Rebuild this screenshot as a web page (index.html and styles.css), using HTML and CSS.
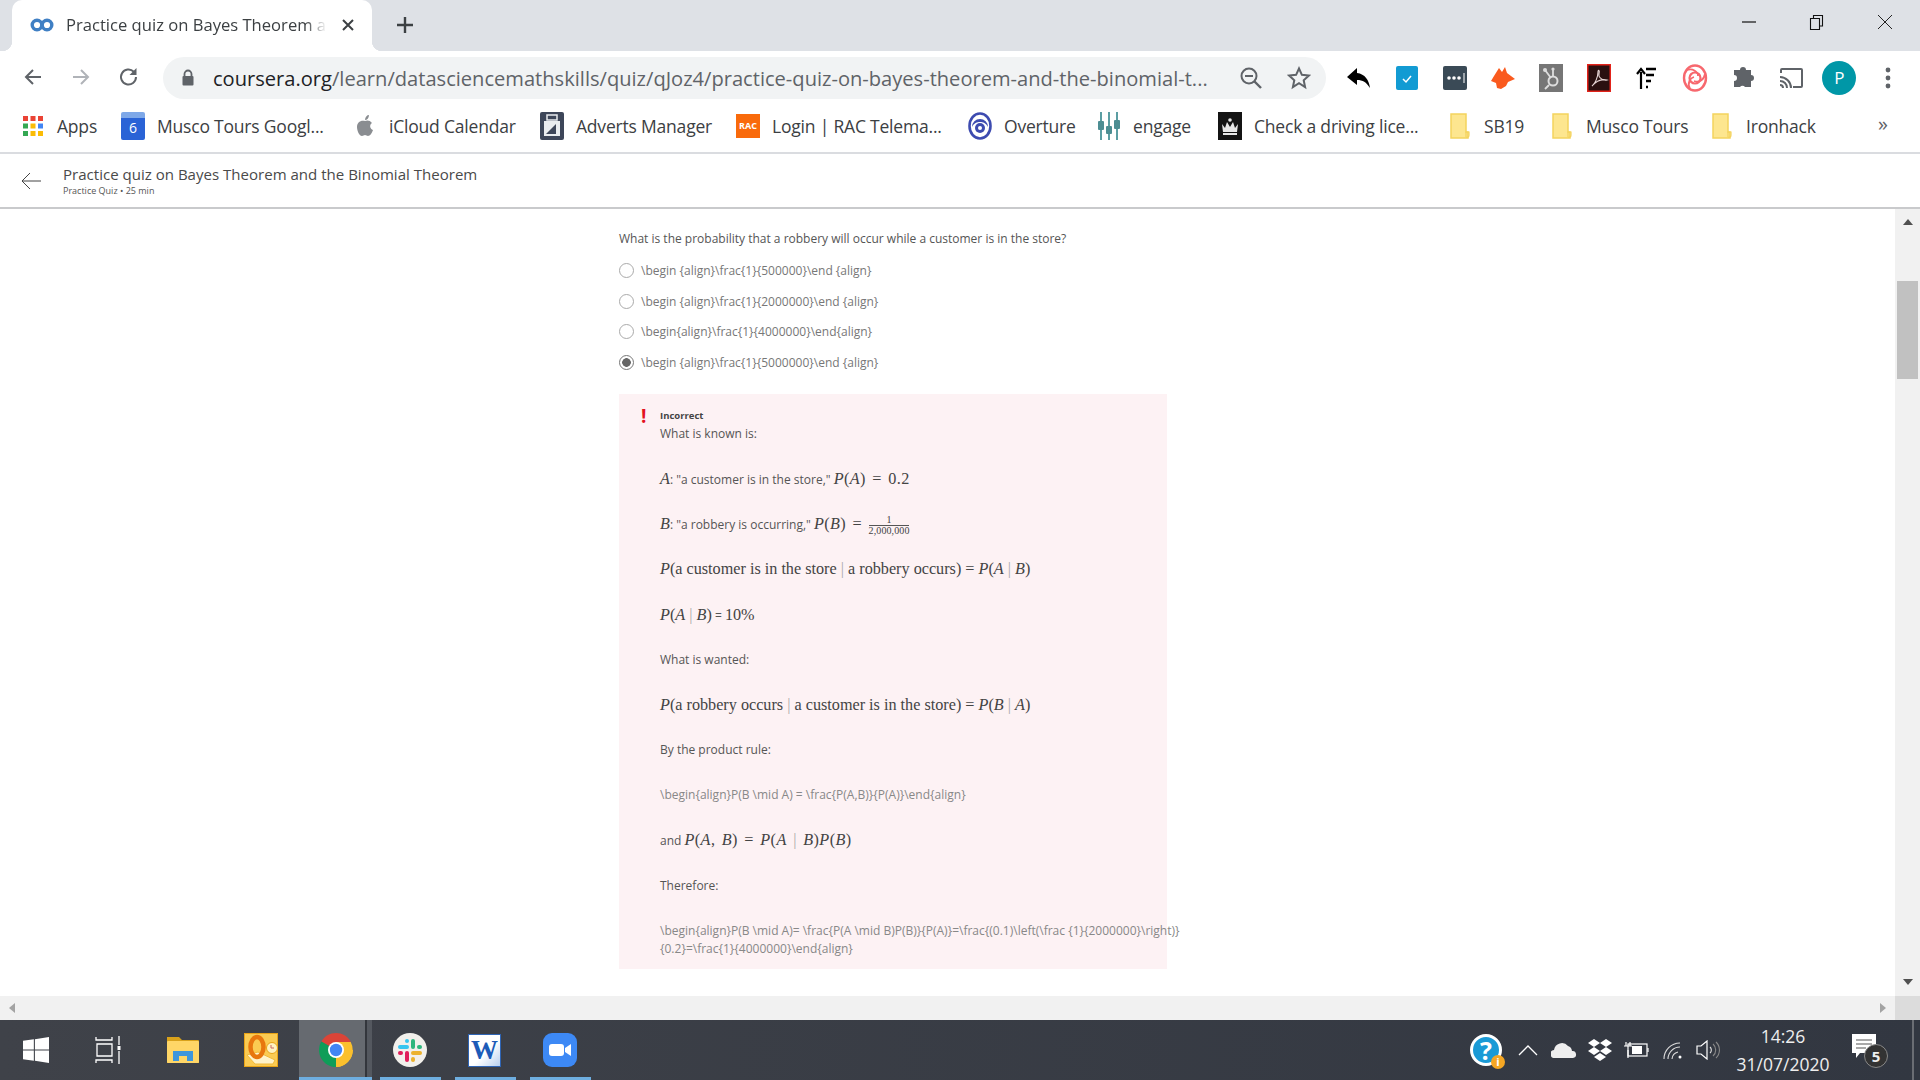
FILE: index.html
```html
<!DOCTYPE html>
<html lang="en">
<head>
<meta charset="utf-8">
<title>Practice quiz on Bayes Theorem</title>
<link rel="stylesheet" href="styles.css">
</head>
<body>
<div class="screen">
  <header class="tabstrip">
    <div class="tab">
      <svg class="fav" viewBox="0 0 24 14" width="24" height="14"><circle cx="7" cy="7" r="4.8" fill="none" stroke="#3f7fc4" stroke-width="3.4"/><circle cx="17" cy="7" r="4.8" fill="none" stroke="#3f7fc4" stroke-width="3.4"/></svg>
      <span class="tab-title">Practice quiz on Bayes Theorem a</span>
      <svg class="tab-x" viewBox="0 0 12 12" width="12" height="12"><path d="M1 1l10 10M11 1L1 11" stroke="#3c4043" stroke-width="2"/></svg>
    </div>
    <svg class="newtab" viewBox="0 0 18 18" width="18" height="18"><path d="M9 1v16M1 9h16" stroke="#3c4043" stroke-width="2.4"/></svg>
    <div class="winctl">
      <svg viewBox="0 0 14 14" width="14" height="14"><path d="M0 7h14" stroke="#111" stroke-width="1.2"/></svg>
      <svg viewBox="0 0 16 16" width="16" height="16"><path d="M1.5 4.500h9v11h-9zM4.500 4.500v-3h9v10.500h-3" fill="none" stroke="#111" stroke-width="1.1"/></svg>
      <svg viewBox="0 0 16 16" width="16" height="16"><path d="M1 1l14 14M15 1L1 15" stroke="#222" stroke-width="1"/></svg>
    </div>
  </header>

  <nav class="toolbar">
    <div class="navbtns">
      <svg viewBox="0 0 20 20" width="20" height="20"><path d="M18 10H3M10 3l-7 7 7 7" fill="none" stroke="#5f6368" stroke-width="2"/></svg>
      <svg viewBox="0 0 20 20" width="20" height="20"><path d="M2 10h15M10 3l7 7-7 7" fill="none" stroke="#b0b3b8" stroke-width="2"/></svg>
      <svg viewBox="0 0 22 22" width="22" height="22"><path d="M18 11a7.500 7.500 0 1 1-2.200-5.300" fill="none" stroke="#5f6368" stroke-width="2"/><path d="M18.500 2v7h-7z" fill="#5f6368"/></svg>
    </div>
    <div class="omnibox">
      <svg class="lock" viewBox="0 0 14 18" width="14" height="18"><path d="M3.500 7V5a3.500 3.500 0 0 1 7 0v2" fill="none" stroke="#5f6368" stroke-width="1.800"/><rect x="1.500" y="7" width="11" height="9.500" rx="1" fill="#5f6368"/></svg>
      <span class="url"><span class="host">coursera.org</span>/learn/datasciencemathskills/quiz/qJoz4/practice-quiz-on-bayes-theorem-and-the-binomial-t...</span>
      <svg class="omni-ic zoomic" viewBox="0 0 24 24" width="24" height="24"><circle cx="10" cy="10" r="7.500" fill="none" stroke="#5f6368" stroke-width="2"/><path d="M15.500 15.500L22 22" stroke="#5f6368" stroke-width="2.400"/><path d="M6 10h8" stroke="#5f6368" stroke-width="2"/></svg>
      <svg class="omni-ic star" viewBox="0 0 24 24" width="24" height="24"><path d="M12 2.500l2.900 6.300 6.900.8-5.100 4.700 1.400 6.800L12 17.200l-6.100 3.900 1.400-6.800-5.100-4.700 6.900-.8z" fill="none" stroke="#5f6368" stroke-width="2"/></svg>
    </div>
    <div class="exts">
      <svg viewBox="0 0 26 24" width="26" height="24"><path d="M11 2L1 11l10 8v-5c6 0 9 2 13 8-1-8-5-14-13-15z" fill="#000"/></svg>
      <svg viewBox="0 0 22 24" width="22" height="24"><rect width="22" height="24" rx="2" fill="#129bd3"/><path d="M7 13l3 3 5-6" fill="none" stroke="#fff" stroke-width="1.500"/></svg>
      <svg viewBox="0 0 24 24" width="24" height="24"><rect width="24" height="24" rx="2" fill="#3a4a56"/><circle cx="6" cy="12" r="1.800" fill="#fff"/><circle cx="11" cy="12" r="1.800" fill="#fff"/><circle cx="16" cy="12" r="1.800" fill="#fff"/><path d="M21 7v10" stroke="#fff" stroke-width="1"/></svg>
      <svg viewBox="0 0 24 24" width="24" height="24"><path d="M3 10L8 2l3 4 3-5 2 6 8 6-7 3-2 4-5 3-4-1-1-5-5-2z" fill="#fa5a1e"/></svg>
      <svg viewBox="0 0 24 28" width="24" height="28"><rect width="24" height="28" fill="#767676"/><circle cx="14" cy="17" r="4.500" fill="none" stroke="#ddd" stroke-width="2"/><path d="M6 6l6 8M14 5v8M10 21l-4 4" stroke="#ddd" stroke-width="1.800"/><circle cx="6" cy="6" r="2" fill="#ddd"/><circle cx="14" cy="5" r="1.600" fill="#ddd"/></svg>
      <svg viewBox="0 0 24 28" width="24" height="28"><rect x=".75" y=".75" width="22.500" height="26.500" fill="#2a1010" stroke="#e2231a" stroke-width="1.500"/><path d="M5 22c3-2 6-9 6-14 0-3 2-2 1 2-1 4 5 7 8 6-4-1-10 0-15 6z" fill="none" stroke="#e9d7d7" stroke-width="1.100"/></svg>
      <svg viewBox="0 0 24 24" width="24" height="24"><path d="M6 23V6M2 8l4-5 4 5" fill="none" stroke="#000" stroke-width="2.200"/><path d="M11 3h10M11 9h8M11 15h5M11 21h2" stroke="#000" stroke-width="2.400"/></svg>
      <svg viewBox="0 0 26 28" width="26" height="28"><ellipse cx="13" cy="14" rx="11" ry="12.500" fill="none" stroke="#f7686e" stroke-width="2.400"/><circle cx="13" cy="14" r="5.500" fill="none" stroke="#f7686e" stroke-width="2.200"/><path d="M5 6c6-2 11 2 11 6M23 10c-1 6-6 9-11 7M8 25c-3-6 0-11 4-12" fill="none" stroke="#f7686e" stroke-width="1.800"/></svg>
      <svg viewBox="0 0 24 24" width="24" height="24"><path d="M9 4a3 3 0 0 1 6 0h5v5a3 3 0 0 1 0 6v6h-6a3 3 0 0 0-5 0H3v-6a3 3 0 0 0 0-6V4z" fill="#5f6368"/></svg>
      <svg viewBox="0 0 24 22" width="24" height="22"><path d="M2 6V3a1 1 0 0 1 1-1h19a1 1 0 0 1 1 1v16a1 1 0 0 1-1 1h-8" fill="none" stroke="#5f6368" stroke-width="2"/><path d="M1 10c6 0 11 5 11 11M1 14c4 0 7 3 7 7M1 18c2 0 3 1 3 3" fill="none" stroke="#5f6368" stroke-width="2"/></svg>
      <span class="avatar">P</span>
      <svg viewBox="0 0 6 22" width="6" height="22"><circle cx="3" cy="3" r="2.400" fill="#5f6368"/><circle cx="3" cy="11" r="2.400" fill="#5f6368"/><circle cx="3" cy="19" r="2.400" fill="#5f6368"/></svg>
    </div>
  </nav>

  <nav class="bookmarks">
    <a class="bm"><svg viewBox="0 0 24 24" width="24" height="24"><g><rect x="2" y="2" width="5" height="5" fill="#ea4335"/><rect x="9.500" y="2" width="5" height="5" fill="#ea4335"/><rect x="17" y="2" width="5" height="5" fill="#ea4335"/><rect x="2" y="9.500" width="5" height="5" fill="#34a853"/><rect x="9.500" y="9.500" width="5" height="5" fill="#fbbc05"/><rect x="17" y="9.500" width="5" height="5" fill="#4285f4"/><rect x="2" y="17" width="5" height="5" fill="#34a853"/><rect x="9.500" y="17" width="5" height="5" fill="#fbbc05"/><rect x="17" y="17" width="5" height="5" fill="#fbbc05"/></g></svg><span>Apps</span></a>
    <a class="bm"><span class="ic-cal">6</span><span>Musco Tours Googl...</span></a>
    <a class="bm"><svg viewBox="0 0 18 24" width="18" height="24"><path d="M9 7c2-1 5-1 7 2-3 2-2 6 1 7-1 3-3 6-5 6-1 0-2-1-3-1s-2 1-3 1c-3 0-5-6-5-9 0-4 3-7 8-6zM9 6c0-3 2-5 4-5 0 3-2 5-4 5z" fill="#8a8d91"/></svg><span>iCloud Calendar</span></a>
    <a class="bm"><svg viewBox="0 0 24 28" width="24" height="28"><rect width="24" height="28" rx="2" fill="#3d4659"/><rect x="4" y="9" width="16" height="15" fill="#e9ecef"/><path d="M6 22l10-10v10z" fill="#3d4659"/><rect x="7" y="3" width="10" height="5" fill="none" stroke="#e9ecef" stroke-width="1.500"/></svg><span>Adverts Manager</span></a>
    <a class="bm"><span class="ic-rac">RAC</span><span>Login | RAC Telema...</span></a>
    <a class="bm"><svg viewBox="0 0 24 28" width="24" height="28"><ellipse cx="12" cy="14" rx="10.500" ry="12.500" fill="none" stroke="#3d4bb0" stroke-width="2.600"/><path d="M4 15a8 8 0 0 1 16 0c-2-4-5-5-8-5s-6 1-8 5z" fill="#3d4bb0"/><circle cx="12" cy="16" r="5" fill="#3d4bb0"/><circle cx="12" cy="16" r="2" fill="#fff"/></svg><span>Overture</span></a>
    <a class="bm"><svg viewBox="0 0 24 28" width="24" height="28"><path d="M4 0v28M12 0v28M20 0v28" stroke="#5b9ea3" stroke-width="2"/><rect x="1" y="9" width="6" height="9" rx="1" fill="#4d8e93"/><rect x="9" y="14" width="6" height="8" rx="1" fill="#4d8e93"/><rect x="17" y="8" width="6" height="9" rx="1" fill="#4d8e93"/></svg><span>engage</span></a>
    <a class="bm"><svg viewBox="0 0 24 28" width="24" height="28"><rect width="24" height="28" fill="#141414"/><path d="M4 12l3 4 2-6 3 5 3-5 2 6 3-4-1 8H5zM5 21h14v2H5z" fill="#e8e8e8"/><circle cx="12" cy="8" r="1.800" fill="#e8e8e8"/></svg><span>Check a driving lice...</span></a>
    <a class="bm"><svg viewBox="0 0 20 26" width="20" height="26"><path d="M1 1h15v18h2v6H1z" fill="#fde68f" stroke="#f4d35e" stroke-width="1.500"/><path d="M16 24v-5h3v3a2 2 0 0 1-3 2" fill="none" stroke="#f4d35e" stroke-width="1.200"/></svg><span>SB19</span></a>
    <a class="bm"><svg viewBox="0 0 20 26" width="20" height="26"><path d="M1 1h15v18h2v6H1z" fill="#fde68f" stroke="#f4d35e" stroke-width="1.500"/><path d="M16 24v-5h3v3a2 2 0 0 1-3 2" fill="none" stroke="#f4d35e" stroke-width="1.200"/></svg><span>Musco Tours</span></a>
    <a class="bm"><svg viewBox="0 0 20 26" width="20" height="26"><path d="M1 1h15v18h2v6H1z" fill="#fde68f" stroke="#f4d35e" stroke-width="1.500"/><path d="M16 24v-5h3v3a2 2 0 0 1-3 2" fill="none" stroke="#f4d35e" stroke-width="1.200"/></svg><span>Ironhack</span></a>
    <span class="more">»</span>
  </nav>

  <section class="coursebar">
    <svg viewBox="0 0 20 18" width="20" height="18"><path d="M20 9H2M9 1L1 9l8 8" fill="none" stroke="#444" stroke-width="1"/></svg>
    <div class="coursetext">
      <div class="coursetitle">Practice quiz on Bayes Theorem and the Binomial Theorem</div>
      <div class="coursesub">Practice Quiz • 25 min</div>
    </div>
  </section>

  <main class="viewport">
    <div class="content">
      <p class="question">What is the probability that a robbery will occur while a customer is in the store?</p>
      <ul class="options">
        <li class="opt"><span class="radio"></span>\begin {align}\frac{1}{500000}\end {align}</li>
        <li class="opt"><span class="radio"></span>\begin {align}\frac{1}{2000000}\end {align}</li>
        <li class="opt"><span class="radio"></span>\begin{align}\frac{1}{4000000}\end{align}</li>
        <li class="opt"><span class="radio on"></span>\begin {align}\frac{1}{5000000}\end {align}</li>
      </ul>
      <article class="feedback">
        <span class="bang">!</span>
        <div class="incorrect">Incorrect</div>
        <div class="line first">What is known is:</div>
        <div class="line"><span class="m"><i>A</i></span>: "a customer is in the store," <span class="m wide"><i>P</i>(<i>A</i>) = 0.2</span></div>
        <div class="line"><span class="m"><i>B</i></span>: "a robbery is occurring," <span class="m wide"><i>P</i>(<i>B</i>) = <span class="frac"><span>1</span><span class="den">2,000,000</span></span></span></div>
        <div class="line"><span class="m"><i>P</i>(a customer is in the store <span class="bar">|</span> a robbery occurs) = <i>P</i>(<i>A</i> <span class="bar">|</span> <i>B</i>)</span></div>
        <div class="line"><span class="m"><i>P</i>(<i>A</i> <span class="bar">|</span> <i>B</i>)</span> = <span class="m">10%</span></div>
        <div class="line">What is wanted:</div>
        <div class="line"><span class="m"><i>P</i>(a robbery occurs <span class="bar">|</span> a customer is in the store) = <i>P</i>(<i>B</i> <span class="bar">|</span> <i>A</i>)</span></div>
        <div class="line">By the product rule:</div>
        <div class="line raw">\begin{align}P(B \mid A) = \frac{P(A,B)}{P(A)}\end{align}</div>
        <div class="line">and <span class="m wide"><i>P</i>(<i>A</i>, <i>B</i>) = <i>P</i>(<i>A</i> <span class="bar">|</span> <i>B</i>)<i>P</i>(<i>B</i>)</span></div>
        <div class="line">Therefore:</div>
        <div class="line raw">\begin{align}P(B \mid A)= \frac{P(A \mid B)P(B)}{P(A)}=\frac{(0.1)\left(\frac {1}{2000000}\right)}</div>
        <div class="raw cont">{0.2}=\frac{1}{4000000}\end{align}</div>
      </article>
    </div>
    <div class="vscroll">
      <span class="arr up"></span>
      <div class="track"><div class="thumb"></div></div>
      <span class="arr down"></span>
    </div>
    <div class="hscroll"><span class="arr left"></span><span class="arr right"></span></div>
    <div class="corner"></div>
  </main>

  <footer class="taskbar">
    <div class="task-left">
      <span class="tb"><svg viewBox="0 0 24 24" width="26" height="26"><path d="M0 3.500l10-1.400V11.500H0zM11 2l13-2v11.500H11zM0 12.500h10V22L0 20.500zM11 12.500h13V24l-13-2z" fill="#fff"/></svg></span>
      <span class="tb"><svg viewBox="0 0 26 28" width="26" height="28"><path d="M1 1v3h16V1M1 27v-3h16v3M2 8h15v12H2z" fill="none" stroke="#fff" stroke-width="1.300"/><path d="M24 0v9M24 15v13" stroke="#fff" stroke-width="1.300"/><rect x="22.500" y="10" width="3" height="4" fill="#fff"/></svg></span>
      <span class="tb"><svg viewBox="0 0 32 28" width="32" height="28"><path d="M0 1h12l3 3h16a1 1 0 0 1 1 1v22H0z" fill="#d9a21b"/><rect y="5" width="32" height="22" rx="1" fill="#ffd667"/><path d="M6 25V15h20v10h-6v-5h-8v5z" fill="#3e96dc"/></svg></span>
      <span class="tb"><svg viewBox="0 0 34 34" width="34" height="34"><rect x=".5" y=".5" width="33" height="33" fill="#fbcb52" stroke="#e8a317"/><path d="M3 22l8 9h18l2-4-17-8z" fill="#fff3c9" stroke="#f0b93a"/><ellipse cx="13" cy="14" rx="6.500" ry="10" fill="none" stroke="#e8770e" stroke-width="4.500"/><circle cx="28" cy="15" r="5.500" fill="#fff2c0" stroke="#e8a317"/><path d="M27 12v3h3" stroke="#c66" fill="none"/></svg></span>
      <span class="tb active"><svg viewBox="0 0 34 34" width="34" height="34"><path d="M17 17L2.300 8.500A17 17 0 0 1 31.700 8.500z" fill="#db4437"/><path d="M17 17h17A17 17 0 0 1 17 34z" fill="#fbc02d"/><path d="M17 34A17 17 0 0 1 2.300 8.500L17 17z" fill="#0f9d58"/><path d="M17 9h14.700A17 17 0 0 1 17 34l7-12z" fill="#fbc02d"/><circle cx="17" cy="17" r="8" fill="#fff"/><circle cx="17" cy="17" r="6.200" fill="#4285f4"/></svg></span>
      <span class="tb run"><svg viewBox="0 0 34 34" width="34" height="34"><circle cx="17" cy="17" r="17" fill="#f2f0ec"/><rect x="18" y="6" width="4" height="10" rx="2" fill="#2eb67d"/><rect x="18" y="18" width="11" height="4" rx="2" fill="#ecb22e"/><rect x="12" y="18" width="4" height="11" rx="2" fill="#e01e5a"/><rect x="18" y="24" width="4" height="5" rx="2" fill="#ecb22e"/><rect x="5" y="12" width="11" height="4" rx="2" fill="#36c5f0"/><rect x="24" y="12" width="5" height="4" rx="2" fill="#2eb67d"/><rect x="12" y="6" width="4" height="4" rx="2" fill="#36c5f0"/><rect x="5" y="18" width="5" height="4" rx="2" fill="#e01e5a"/></svg></span>
      <span class="tb run"><span class="ic-word">W</span></span>
      <span class="tb run"><svg viewBox="0 0 34 34" width="34" height="34"><rect width="34" height="34" rx="9" fill="#3d89f5"/><rect x="6" y="11" width="15" height="12" rx="3" fill="#fff"/><path d="M22 15l6-4v12l-6-4z" fill="#fff"/></svg></span>
    </div>
    <div class="tray">
      <span class="helpic">?<b>i</b></span>
      <svg viewBox="0 0 20 12" width="20" height="12"><path d="M1 11l9-9 9 9" fill="none" stroke="#fff" stroke-width="1.300"/></svg>
      <svg viewBox="0 0 26 16" width="26" height="16"><path d="M4 16a4 4 0 0 1-1-8 8 8 0 0 1 14-4 6 6 0 0 1 4 5 3.500 3.500 0 0 1 1 7z" fill="#eee"/></svg>
      <svg viewBox="0 0 24 22" width="24" height="22"><path d="M6 0l6 4-6 4-6-4zM18 0l6 4-6 4-6-4zM6 8l6 4-6 4-6-4zM18 8l6 4-6 4-6-4zM12 14l6 4-6 4-6-4z" fill="#fff"/></svg>
      <svg viewBox="0 0 26 18" width="26" height="18"><rect x="5" y="3" width="19" height="12" fill="none" stroke="#fff" stroke-width="1.200"/><rect x="9" y="5" width="10" height="8" fill="#fff"/><path d="M25 7v4M1 5h8M3 1v4M7 1v4M5 9v8" stroke="#fff" stroke-width="1.200"/></svg>
      <svg viewBox="0 0 20 18" width="20" height="18"><path d="M1 18a16 16 0 0 1 16-16M5 18a12 12 0 0 1 12-12M9 18a8 8 0 0 1 6-7" fill="none" stroke="#ddd" stroke-width="1.100"/><circle cx="17" cy="16" r="1.500" fill="#fff"/></svg>
      <svg viewBox="0 0 24 20" width="24" height="20"><path d="M1 6h4l6-5v18l-6-5H1z" fill="none" stroke="#fff" stroke-width="1.200"/><path d="M14 7a4 4 0 0 1 0 6" fill="none" stroke="#ddd" stroke-width="1.100"/><path d="M17 4a8 8 0 0 1 0 12M20 2a11 11 0 0 1 0 16" fill="none" stroke="#888" stroke-width="1.100"/></svg>
      <div class="clock"><div>14:26</div><div>31/07/2020</div></div>
      <div class="notif"><svg viewBox="0 0 24 24" width="24" height="24"><path d="M0 0h24v19H8l-4 5v-5H0z" fill="#fff"/><path d="M4 6h16M4 10h16M4 14h10" stroke="#555" stroke-width="1.200"/></svg><span class="count">5</span></div>
    </div>
  </footer>
</div>
</body>
</html>
```
FILE: styles.css
```css
* { box-sizing: border-box; }
html, body { margin: 0; padding: 0; height: 100%; overflow: hidden; background: #fff; }
body { font-family: "Open Sans", "Noto Sans", "Liberation Sans", sans-serif; color: #3c4043; }
.screen { width: 1920px; height: 1080px; display: flex; flex-direction: column; }
svg { display: block; flex: none; }

/* tab strip */
.tabstrip { height: 51px; background: #dee1e6; display: flex; align-items: center; position: relative; flex: none; }
.tab { width: 360px; height: 51px; margin-left: 12px; background: #fff; border-radius: 10px 10px 0 0; display: flex; align-items: center; padding: 0 0 2px 18px; position: relative; }
.tab::before, .tab::after { content: ""; position: absolute; bottom: 0; width: 10px; height: 10px; background: radial-gradient(circle at 0 0, transparent 10px, #fff 10.500px); }
.tab::before { left: -10px; }
.tab::after { right: -10px; background: radial-gradient(circle at 100% 0, transparent 10px, #fff 10.500px); }
.fav { margin-right: 12px; }
.tab-title { font-size: 16.600px; width: 266px; white-space: nowrap; overflow: hidden; color: #3c4043; -webkit-mask-image: linear-gradient(90deg, #000 90%, transparent 98%); mask-image: linear-gradient(90deg, #000 90%, transparent 98%); }
.tab-x { margin-left: 10px; }
.newtab { margin: 0 0 2px 24px; }
.winctl { margin-left: auto; display: grid; grid-template-columns: repeat(3, 68px); justify-items: center; align-items: center; padding: 0 1px 8px 0; }

/* toolbar */
.toolbar { height: 51px; background: #fff; display: flex; align-items: center; flex: none; }
.navbtns { width: 163px; display: grid; grid-template-columns: 48px 48px 48px; justify-items: center; align-items: center; padding-left: 9px; }
.omnibox { width: 1163px; height: 42px; margin-top: 3px; background: #f1f3f4; border-radius: 21px; display: flex; align-items: center; padding-left: 18px; }
.lock { margin-right: 18px; }
.url { flex: none; font-size: 20.100px; color: #5f6368; white-space: nowrap; width: 1010px; overflow: hidden; }
.host { color: #202124; }
.omni-ic { margin-right: 24px; }
.zoomic { margin-left: 16px; }
.star { margin-right: 0; }
.exts { flex: 1; display: grid; grid-template-columns: repeat(12, 48.050px); justify-items: center; align-items: center; padding-left: 9px; margin-top: 2px; }
.avatar { width: 34px; height: 34px; border-radius: 50%; background: #0097a7; color: #fff; font-size: 17px; display: flex; align-items: center; justify-content: center; }

/* bookmarks */
.bookmarks { height: 52px; border-bottom: 2px solid #dadce0; background: #fff; display: grid; grid-template-columns: 100px 232px 187px 196px 232px 129px 121px 230px 102px 160px 168px 1fr; padding: 0 0 3px 21px; align-items: center; flex: none; }
.bm { display: flex; align-items: center; gap: 12px; font-size: 17.500px; letter-spacing: -.2px; color: #3c4043; white-space: nowrap; }
.bm > svg { width: 24px; }
.ic-cal { width: 24px; height: 28px; background: linear-gradient(#7ea8e8 0 6px, #2a63d6 6px); color: #fff; font-size: 14px; text-align: center; line-height: 32px; border-radius: 2px; }
.ic-rac { width: 24px; height: 24px; background: #f96a0b; color: #fff; font-size: 9px; font-weight: 700; line-height: 24px; text-align: center; letter-spacing: 0; }
.more { font-size: 20px; color: #5f6368; justify-self: start; line-height: 1; margin-top: -3px; }

/* course header */
.coursebar { height: 55px; border-bottom: 2px solid #c9cacc; display: flex; align-items: center; padding-left: 21px; gap: 22px; flex: none; }
.coursetext { padding-top: 1px; }
.coursetitle { font-size: 15.050px; line-height: 18px; color: #4a4a4a; white-space: nowrap; }
.coursesub { font-size: 9px; line-height: 13px; color: #555; margin-top: 1px; white-space: nowrap; }

/* main */
.viewport { height: 811px; display: grid; grid-template-columns: 1895px 25px; grid-template-rows: 787px 24px; flex: none; }
.content { overflow: hidden; padding: 21px 0 0 619px; }
.question { margin: 0; font-size: 12px; line-height: 18px; color: #555; white-space: nowrap; }
.options { list-style: none; margin: 7px 0 16px; padding: 0; }
.opt { height: 30.700px; display: flex; align-items: center; font-size: 12px; color: #777; gap: 7px; white-space: nowrap; }
.radio { width: 15px; height: 15px; border: 1.500px solid #aaa; border-radius: 50%; background: #fff; flex: none; }
.radio.on { border-color: #777; background: radial-gradient(circle, #666 0 4px, #fff 4.600px); }
.feedback { width: 548px; height: 575px; background: #fdf2f4; padding: 15px 0 0 41px; position: relative; font-size: 12px; color: #555; }
.bang { position: absolute; left: 22px; top: 12px; color: #e3121f; font-size: 19px; font-weight: 700; line-height: 20px; }
.incorrect { font-size: 9.500px; font-weight: 700; line-height: 14px; color: #444; }
.line { height: 18px; line-height: 18px; margin-top: 27.200px; white-space: nowrap; }
.line.first { margin-top: 2px; }
.raw { color: #888; font-size: 12px; }
.cont { line-height: 18px; white-space: nowrap; }
.m { font-family: "Liberation Serif", "DejaVu Serif", serif; font-size: 16.200px; color: #444; }
.wide { letter-spacing: .4px; word-spacing: 2px; }
.bar { color: #aaa; }
.frac { display: inline-flex; flex-direction: column; align-items: center; vertical-align: middle; font-size: 10px; line-height: 10px; letter-spacing: 0; }
.frac .den { border-top: 1px solid #555; letter-spacing: .1px; }

/* scrollbars */
.vscroll { background: #f1f1f1; display: flex; flex-direction: column; align-items: center; }
.track { flex: 1; width: 100%; padding: 51px 2px 0; }
.thumb { height: 98px; background: #c1c1c1; }
.arr { width: 0; height: 0; border: 5.500px solid transparent; flex: none; }
.arr.up { border-bottom: 6px solid #505050; border-top-width: 0; margin: 10px 0 5px; }
.arr.down { border-top: 6px solid #505050; border-bottom-width: 0; margin: 5px 0 11px; }
.hscroll { background: #f1f1f1; display: flex; justify-content: space-between; align-items: center; padding: 0 9px; }
.arr.left { border-right: 6px solid #a3a3a3; border-left-width: 0; }
.arr.right { border-left: 6px solid #a3a3a3; border-right-width: 0; }
.corner { background: #dcdcdc; }

/* taskbar */
.taskbar { height: 60px; background: linear-gradient(90deg, #3f4249, #323741); display: flex; justify-content: space-between; color: #fff; flex: none; }
.task-left { display: grid; grid-template-columns: 72px 72px 78px 77px 73px 75px 75px 75px; }
.tb { display: flex; align-items: center; justify-content: center; height: 60px; position: relative; }
.tb.active { background: linear-gradient(90deg, #666a70 0 66px, #33363c 66px 68px, #54585f 68px); padding-top: 3px; border-bottom: 3px solid #6eaee0; }
.tb.run::after { content: ""; position: absolute; bottom: 0; left: 8px; right: 6px; height: 3px; background: #6eaee0; }
.ic-word { width: 33px; height: 33px; background: linear-gradient(135deg, #fff 55%, #b9d0ee); border: 1px solid #2f65b5; color: #1c5bb8; font: 700 27px/30px "Liberation Serif", serif; text-align: center; }
.tray { display: grid; grid-template-columns: 48px 36px 36px 36px 36px 38px 32px 118px 56px; justify-items: center; align-items: center; margin-right: 6px; padding-right: 14px; border-right: 2px solid #6a6d73; height: 60px; }
.helpic { width: 32px; height: 32px; border-radius: 50%; background: #1a9ad6; border: 3px solid #fff; font: 700 25px/26px "Open Sans", sans-serif; text-align: center; position: relative; }
.helpic b { position: absolute; right: -6px; bottom: -6px; width: 14px; height: 14px; border-radius: 50%; background: #f5a623; font: 700 11px/14px "Open Sans", sans-serif; }
.clock { font-size: 17.500px; line-height: 28px; text-align: center; color: #eee; white-space: nowrap; }
.notif { position: relative; width: 36px; height: 36px; padding: 2px 0 0 0; }
.count { position: absolute; left: 12px; top: 12px; width: 24px; height: 24px; border-radius: 50%; background: #333; border: 1px solid #888; font-size: 15px; font-weight: 700; line-height: 22px; text-align: center; color: #eee; }
```
